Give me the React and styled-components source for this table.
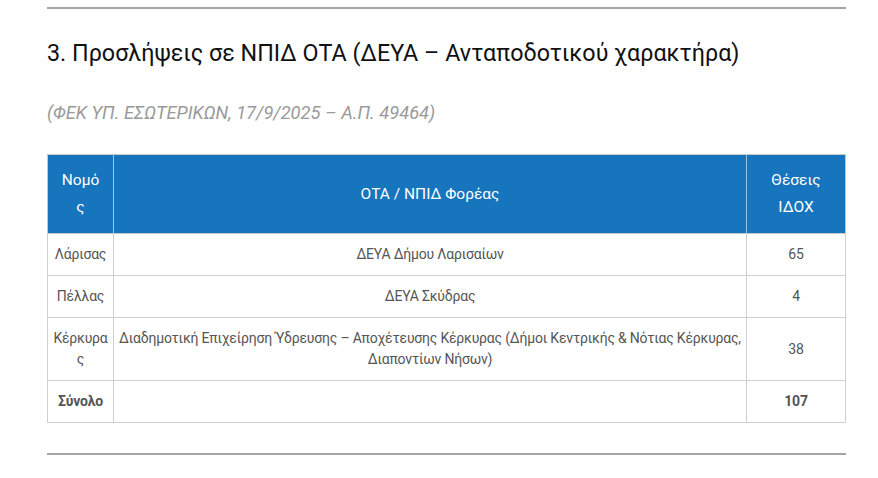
import React from 'react';
import styled, { createGlobalStyle } from 'styled-components';

const GlobalStyle = createGlobalStyle`
  body {
    margin: 0;
    background: #fff;
    font-family: Roboto, "Noto Sans", sans-serif;
  }
`;

const Page = styled.div`
  width: 799px;
  padding: 7px 0 0 47px;
`;

const Rule = styled.hr`
  margin: ${p => (p.bottom ? '30px 0 0' : '0')};
  border: none;
  border-top: 2px solid #a6a6a6;
`;

const Title = styled.h2`
  margin: 28px 0 0;
  font-size: 23.3px;
  line-height: 32px;
  font-weight: 400;
  color: #111;
`;

const Source = styled.p`
  margin: 32px 0 0;
  font-size: 18.3px;
  line-height: 24px;
  font-style: italic;
  color: #9a9a9a;
`;

const Table = styled.table`
  margin-top: 29px;
  width: 799px;
  border-collapse: collapse;
  table-layout: fixed;
  font-size: 14px;
  letter-spacing: -0.2px;
  color: #555;
`;

const Head = styled.th`
  background: #1675bd;
  color: #fff;
  font-weight: 400;
  font-size: 15.5px;
  letter-spacing: 0;
  line-height: 27px;
  padding: 12px 12px;
  text-align: center;
  border: 1px solid #c9c9c9;
  border-left-color: ${p => (p.first ? '#c9c9c9' : '#9cc4e4')};
  border-right-color: ${p => (p.last ? '#c9c9c9' : '#9cc4e4')};
  word-break: ${p => (p.first ? 'break-all' : 'normal')};
`;

const Cell = styled.td`
  padding: 10px ${p => (p.narrow ? 3 : 4)}px;
  line-height: 21px;
  text-align: center;
  border: 1px solid #cfcfcf;
  font-weight: ${p => (p.bold ? 700 : 400)};
  word-break: ${p => (p.narrow ? 'break-all' : 'normal')};
`;

const rows = [
  { region: 'Λάρισας', body: 'ΔΕΥΑ Δήμου Λαρισαίων', seats: '65' },
  { region: 'Πέλλας', body: 'ΔΕΥΑ Σκύδρας', seats: '4' },
  {
    region: 'Κέρκυρας',
    body: 'Διαδημοτική Επιχείρηση Ύδρευσης – Αποχέτευσης Κέρκυρας (Δήμοι Κεντρικής & Νότιας Κέρκυρας, Διαποντίων Νήσων)',
    seats: '38',
  },
];

export default function App() {
  return (
    <Page>
      <GlobalStyle />
      <Rule />
      <Title>3. Προσλήψεις σε ΝΠΙΔ ΟΤΑ (ΔΕΥΑ – Ανταποδοτικού χαρακτήρα)</Title>
      <Source>(ΦΕΚ ΥΠ. ΕΣΩΤΕΡΙΚΩΝ, 17/9/2025 – Α.Π. 49464)</Source>
      <Table>
        <colgroup>
          <col style={{ width: 66 }} />
          <col />
          <col style={{ width: 99 }} />
        </colgroup>
        <thead>
          <tr>
            <Head first>Νομός</Head>
            <Head>ΟΤΑ / ΝΠΙΔ Φορέας</Head>
            <Head last>Θέσεις ΙΔΟΧ</Head>
          </tr>
        </thead>
        <tbody>
          {rows.map(r => (
            <tr key={r.region}>
              <Cell narrow>{r.region}</Cell>
              <Cell>{r.body}</Cell>
              <Cell>{r.seats}</Cell>
            </tr>
          ))}
          <tr>
            <Cell narrow bold>Σύνολο</Cell>
            <Cell />
            <Cell bold>107</Cell>
          </tr>
        </tbody>
      </Table>
      <Rule bottom />
    </Page>
  );
}
